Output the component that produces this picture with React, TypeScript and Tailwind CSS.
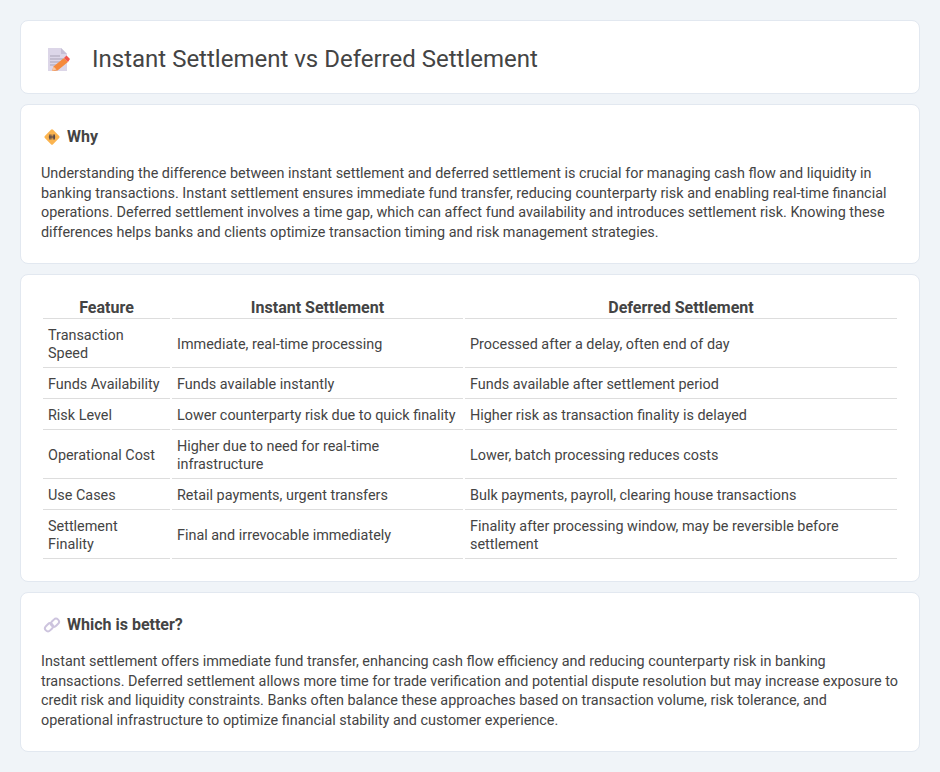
import React from "react";

const rows: [string, string, string][] = [
  ["Transaction Speed", "Immediate, real-time processing", "Processed after a delay, often end of day"],
  ["Funds Availability", "Funds available instantly", "Funds available after settlement period"],
  ["Risk Level", "Lower counterparty risk due to quick finality", "Higher risk as transaction finality is delayed"],
  ["Operational Cost", "Higher due to need for real-time infrastructure", "Lower, batch processing reduces costs"],
  ["Use Cases", "Retail payments, urgent transfers", "Bulk payments, payroll, clearing house transactions"],
  ["Settlement Finality", "Final and irrevocable immediately", "Finality after processing window, may be reversible before settlement"],
];

function DocIcon() {
  return (
    <svg width="24" height="24" viewBox="0 0 24 24" className="shrink-0">
      <path d="M1 1h13l6 6v17H1z" fill="#dcd6e8" />
      <path d="M14 1l6 6h-6z" fill="#c6bfd6" />
      <path d="M3 9h10M3 12h13M3 15h10M3 18h7" stroke="#a9a3b6" strokeWidth="1" />
      <path d="M5 24l1.500-4.500L17 11l4 4-10.500 8.500z" fill="#f58a3c" />
      <path d="M17 11l2.500-2.500 3.500 3.500-2 3z" fill="#f2564e" />
      <path d="M5 24l1.500-4.500 3 3z" fill="#f7c59f" />
    </svg>
  );
}

function WarnIcon() {
  return (
    <svg width="18" height="18" viewBox="0 0 18 18" className="shrink-0">
      <rect x="3.200" y="3.200" width="11.600" height="11.600" rx="1.500" transform="rotate(45 9 9)" fill="#fbb44f" />
      <path d="M6.800 6.500v5M8 6.500v5M10.200 6.500v5M11.400 6.500v5M5.800 9h6.400" stroke="#4f4046" strokeWidth="1" />
    </svg>
  );
}

function LinkIcon() {
  return (
    <svg width="18" height="18" viewBox="0 0 18 18" className="shrink-0" fill="none">
      <rect x="1.600" y="8.300" width="8.800" height="6" rx="3" transform="rotate(-45 6 11.300)" stroke="#cdc4de" strokeWidth="2" />
      <rect x="7.600" y="3.700" width="8.800" height="6" rx="3" transform="rotate(-45 12 6.700)" stroke="#cdc4de" strokeWidth="2" />
    </svg>
  );
}

export default function App() {
  const card = "bg-white border border-[#e2e8f0] rounded-lg";
  const td = "pt-[6px] pb-[4px] px-[5px] border-b border-[#dddddd] align-middle";
  const h2 = "flex items-center gap-[6px] pl-[2px] text-[16px] leading-[22px] font-bold text-[#444444]";
  return (
    <div className="min-h-[772px] bg-[#f0f4f8] px-5 py-5 flex flex-col gap-[10px] text-[#444444] text-[14.4px] leading-[19.6px] font-['Roboto',sans-serif]">
      <div className={`${card} h-[74px] flex items-center pl-[26px] pt-[4px] gap-[21px]`}>
        <DocIcon />
        <h1 className="text-[24px] leading-[32px] font-normal text-[#444444]">Instant Settlement vs Deferred Settlement</h1>
      </div>

      <div className={`${card} h-[160px] px-5 pt-[21px]`}>
        <h2 className={h2}>
          <WarnIcon />
          Why
        </h2>
        <p className="mt-[16px]">
          Understanding the difference between instant settlement and deferred settlement is crucial for managing cash flow and liquidity in banking transactions. Instant settlement ensures immediate fund transfer, reducing counterparty risk and enabling real-time financial operations. Deferred settlement involves a time gap, which can affect fund availability and introduces settlement risk. Knowing these differences helps banks and clients optimize transaction timing and risk management strategies.
        </p>
      </div>

      <div className={`${card} h-[308px] px-5 pt-[21px]`}>
        <table className="w-full border-separate border-spacing-[2px] table-fixed leading-[18px]">
          <colgroup>
            <col className="w-[127px]" />
            <col className="w-[291px]" />
            <col />
          </colgroup>
          <thead>
            <tr>
              {["Feature", "Instant Settlement", "Deferred Settlement"].map((h) => (
                <th key={h} className="border-b border-[#dddddd] text-center text-[16px] leading-[19px] font-bold text-[#444444] px-[5px] pt-0 pb-px">
                  {h}
                </th>
              ))}
            </tr>
          </thead>
          <tbody>
            {rows.map((r) => (
              <tr key={r[0]}>
                {r.map((c) => (
                  <td key={c} className={td}>
                    {c}
                  </td>
                ))}
              </tr>
            ))}
          </tbody>
        </table>
      </div>

      <div className={`${card} h-[160px] px-5 pt-[21px]`}>
        <h2 className={h2}>
          <LinkIcon />
          Which is better?
        </h2>
        <p className="mt-[16px]">
          Instant settlement offers immediate fund transfer, enhancing cash flow efficiency and reducing counterparty risk in banking transactions. Deferred settlement allows more time for trade verification and potential dispute resolution but may increase exposure to credit risk and liquidity constraints. Banks often balance these approaches based on transaction volume, risk tolerance, and operational infrastructure to optimize financial stability and customer experience.
        </p>
      </div>
    </div>
  );
}
